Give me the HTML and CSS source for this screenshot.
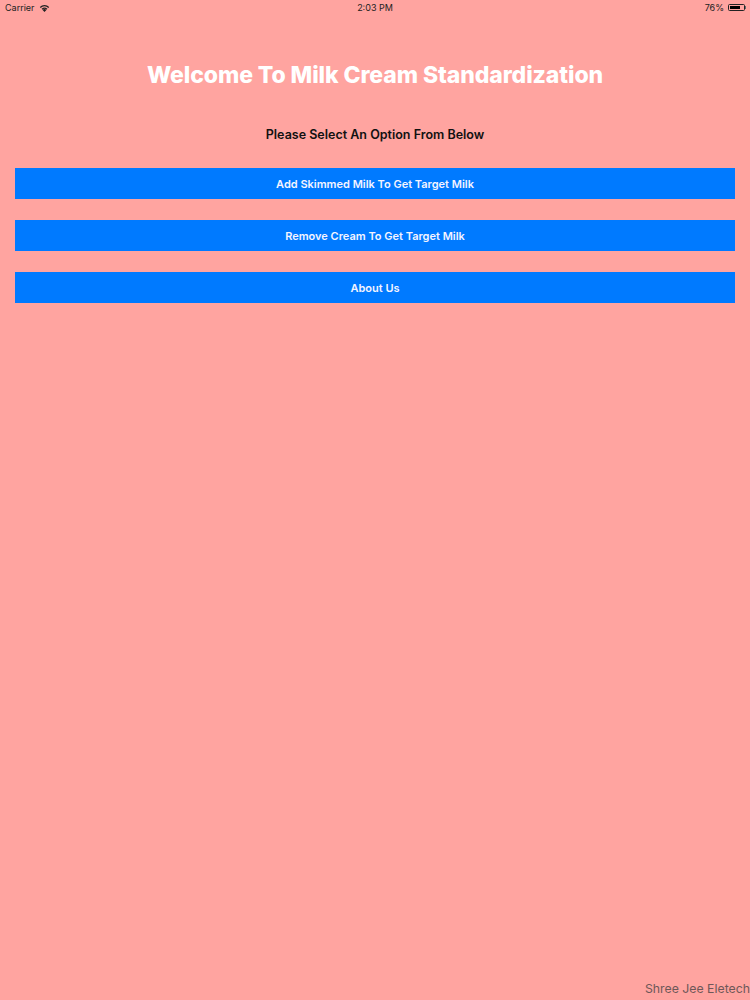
FILE: index.html
```html
<!DOCTYPE html>
<html>
<head>
<meta charset="utf-8">
<link rel="stylesheet" href="styles.css">
</head>
<body>
<div class="screen">
  <div class="status">
    <div class="status-left">
      <span>Carrier</span>
      <svg class="wifi" width="11" height="8" viewBox="0 0 11 8">
        <path d="M5.5 8 L3.6 5.9 A2.7 2.7 0 0 1 7.4 5.9 Z" fill="#222"/>
        <path d="M2.6 4.8 A4.2 4.2 0 0 1 8.4 4.8 L7.6 5.7 A3 3 0 0 0 3.4 5.7 Z" fill="#222"/>
        <path d="M0.8 2.9 A6.8 6.8 0 0 1 10.2 2.9 L9.3 3.9 A5.4 5.4 0 0 0 1.7 3.9 Z" fill="#222"/>
      </svg>
    </div>
    <div class="status-center">2:03 PM</div>
    <div class="status-right">
      <span>76%</span>
      <span class="battery"><span class="battery-fill"></span></span>
      <span class="battery-tip"></span>
    </div>
  </div>
  <main class="content">
    <h1 class="title">Welcome To Milk Cream Standardization</h1>
    <p class="subtitle">Please Select An Option From Below</p>
    <div class="buttons">
      <button class="btn">Add Skimmed Milk To Get Target Milk</button>
      <button class="btn">Remove Cream To Get Target Milk</button>
      <button class="btn">About Us</button>
    </div>
  </main>
  <footer class="footer">Shree Jee Eletech</footer>
</div>
</body>
</html>
```

FILE: styles.css
```css
html, body {
  margin: 0;
  padding: 0;
}
body {
  background: #ffa4a0;
  font-family: Inter, "Liberation Sans", sans-serif;
}
.screen {
  width: 750px;
  height: 1000px;
  display: flex;
  flex-direction: column;
  box-sizing: border-box;
}
.status {
  height: 15px;
  display: flex;
  align-items: center;
  justify-content: space-between;
  padding: 0 4px 0 5px;
  font-size: 9px;
  color: #222;
  position: relative;
}
.status-left {
  display: flex;
  align-items: center;
  gap: 4px;
}
.status-center {
  position: absolute;
  left: 0;
  right: 0;
  text-align: center;
  pointer-events: none;
}
.status-right {
  display: flex;
  align-items: center;
  gap: 3px;
}
.battery {
  width: 17px;
  height: 7px;
  border: 1px solid #222;
  border-radius: 1.5px;
  padding: 1px;
  box-sizing: border-box;
  display: flex;
  margin-left: 1px;
}
.battery-fill {
  width: 78%;
  background: #000;
}
.battery-tip {
  width: 1px;
  height: 3px;
  background: #666;
  margin-left: -3px;
}
.content {
  flex: 1;
  display: flex;
  flex-direction: column;
  align-items: center;
  padding: 0 15px;
}
.title {
  margin: 46px 0 0;
  font-size: 23px;
  font-weight: 800;
  color: #fff;
  line-height: 28px;
  letter-spacing: -0.1px;
}
.subtitle {
  margin: 38px 0 0;
  font-size: 12.5px;
  font-weight: 600;
  color: #111;
  line-height: 16px;
}
.buttons {
  align-self: stretch;
  display: flex;
  flex-direction: column;
  gap: 21px;
  margin-top: 25px;
}
.btn {
  height: 31px;
  border: none;
  background: #007aff;
  color: #f4f4ff;
  font-family: Inter, "Liberation Sans", sans-serif;
  font-size: 11px;
  font-weight: 600;
  padding: 0;
}
.footer {
  text-align: right;
  font-size: 12.3px;
  color: #6e5858;
  padding: 0 0 3px;
  line-height: 16px;
}
```
